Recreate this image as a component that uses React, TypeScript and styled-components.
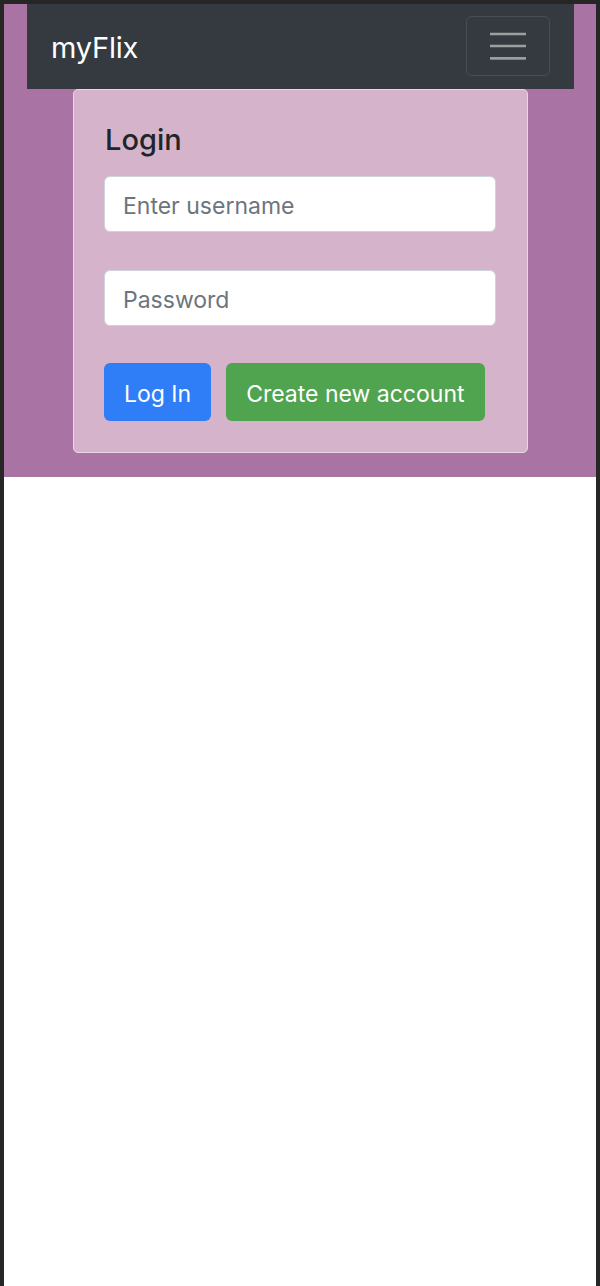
import React from "react";
import styled, { createGlobalStyle } from "styled-components";

const Global = createGlobalStyle`
  html, body { margin: 0; padding: 0; background: #262626; }
  body { font-family: Inter, "Noto Sans", "Liberation Sans", sans-serif; }
  * { box-sizing: border-box; }
`;

const Frame = styled.div`
  min-height: 1286px;
  padding: 4px 4px 0 4px;
  background: #262626;
  display: flex;
`;

const Page = styled.div`
  flex: 1;
  background: #ffffff;
  display: flex;
  flex-direction: column;
`;

const Hero = styled.section`
  background: #a974a3;
  padding: 0 22px 24px 23px;
  display: flex;
  flex-direction: column;
  align-items: stretch;
`;

const Navbar = styled.nav`
  height: 85px;
  background: #343a40;
  display: flex;
  align-items: center;
  justify-content: space-between;
  padding: 0 24px 0 24px;
`;

const Brand = styled.a`
  color: #ffffff;
  font-size: 29px;
  font-weight: 400;
  text-decoration: none;
  letter-spacing: -0.2px;
  margin-top: 2px;
`;

const Toggler = styled.button`
  width: 84px;
  height: 60px;
  margin-top: -2px;
  background: transparent;
  border: 1.5px solid rgba(255, 255, 255, 0.1);
  border-radius: 6px;
  display: flex;
  align-items: center;
  justify-content: center;
  padding: 0;
`;

const Card = styled.div`
  align-self: center;
  width: 455px;
  background: #d5b4cb;
  border: 1.5px solid #e6d7e3;
  border-radius: 5px;
  padding: 31px 31px 31px 30px;
  display: flex;
  flex-direction: column;
`;

const Title = styled.h5`
  margin: 0 0 19px 1px;
  padding-top: 2px;
  font-size: 29px;
  line-height: 34px;
  font-weight: 500;
  color: #212529;
`;

const Input = styled.input<{ $gap: number }>`
  width: 392px;
  height: 56px;
  margin-bottom: ${(p) => p.$gap}px;
  padding: 3px 18px 0 18px;
  font-family: inherit;
  font-size: 23px;
  color: #212529;
  background: #ffffff;
  border: 1.5px solid #ced4da;
  border-radius: 6px;
  outline: none;
  &::placeholder { color: #6c757d; opacity: 1; }
`;

const Actions = styled.div`
  display: flex;
  gap: 15px;
  align-items: center;
`;

const Button = styled.button<{ $tone: "primary" | "success" }>`
  height: 58px;
  padding: 3px 20px 0 20px;
  border: none;
  border-radius: 6px;
  font-family: inherit;
  font-size: 23px;
  color: #ffffff;
  background: ${(p) => (p.$tone === "primary" ? "#2f7ef7" : "#51a44f")};
  cursor: pointer;
`;

const Hamburger = () => (
  <svg width="36" height="28" viewBox="0 0 36 28">
    <g stroke="#9a9ea1" strokeWidth="2.6" strokeLinecap="butt">
      <line x1="0" y1="2" x2="36" y2="2" />
      <line x1="0" y1="14" x2="36" y2="14" />
      <line x1="0" y1="26.4" x2="36" y2="26.4" />
    </g>
  </svg>
);

export default function App() {
  return (
    <>
      <Global />
      <Frame>
        <Page>
          <Hero>
            <Navbar>
              <Brand href="#">myFlix</Brand>
              <Toggler aria-label="Toggle navigation">
                <Hamburger />
              </Toggler>
            </Navbar>
            <Card>
              <Title>Login</Title>
              <Input $gap={38} type="text" placeholder="Enter username" />
              <Input $gap={37} type="password" placeholder="Password" />
              <Actions>
                <Button $tone="primary">Log In</Button>
                <Button $tone="success">Create new account</Button>
              </Actions>
            </Card>
          </Hero>
        </Page>
      </Frame>
    </>
  );
}
